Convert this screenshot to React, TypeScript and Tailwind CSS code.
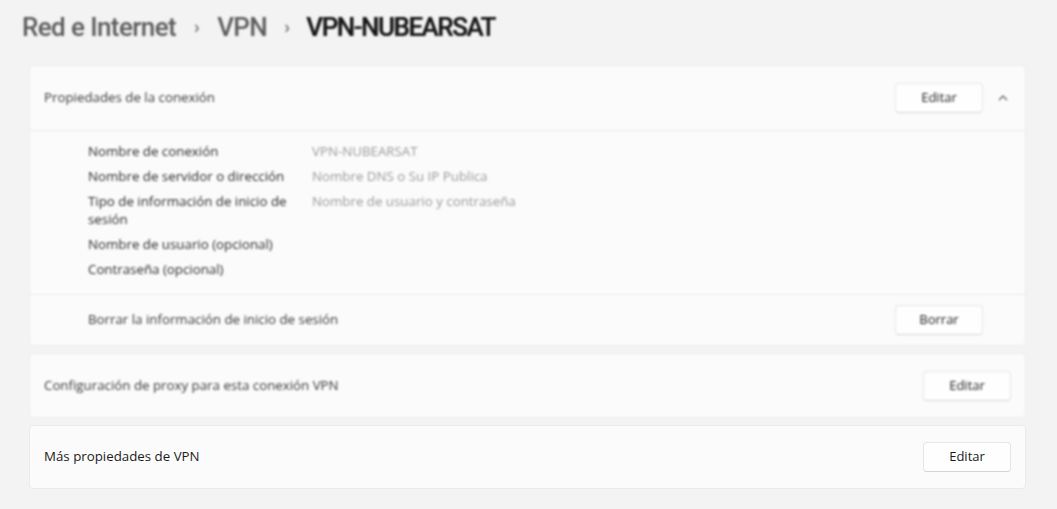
import React from "react";

const font = { fontFamily: '"Open Sans", "Noto Sans", sans-serif' };
const titleFont = { fontFamily: 'Roboto, "Noto Sans", sans-serif' };

function Btn({ label }: { label: string }) {
  return (
    <button className="w-[88px] h-[30px] rounded-[4px] bg-[#fefefe] border border-[#e6e6e6] border-b-[#d4d4d4] text-[13px] text-[#1b1b1b] flex items-center justify-center">
      {label}
    </button>
  );
}

const rows: [string, string][] = [
  ["Nombre de conexión", "VPN-NUBEARSAT"],
  ["Nombre de servidor o dirección", "Nombre DNS o Su IP Publica"],
  ["Tipo de información de inicio de sesión", "Nombre de usuario y contraseña"],
  ["Nombre de usuario (opcional)", ""],
  ["Contraseña (opcional)", ""],
];

export default function App() {
  return (
    <div style={font} className="w-[1057px] h-[509px] bg-[#f3f3f3] overflow-hidden">
      <div className="blur-[1.2px]">
        <div className="pl-[22px] pt-[8px] h-[65px] flex items-start">
          <h1 style={titleFont} className="flex items-center whitespace-nowrap text-[26px] leading-[38px] font-medium tracking-[-0.6px]">
            <span className="text-[#5c5c5c]">Red e Internet</span>
            <span className="text-[#6a6a6a] text-[19px] mx-[18px]">›</span>
            <span className="text-[#5c5c5c]">VPN</span>
            <span className="text-[#6a6a6a] text-[19px] mx-[17px]">›</span>
            <span className="text-[#161616] font-medium tracking-[-1.5px] [text-shadow:0_0_0.6px_#161616]">VPN-NUBEARSAT</span>
          </h1>
        </div>
        <div className="ml-[29px] w-[997px] flex flex-col gap-[7px]">
          <div className="bg-[#fbfbfb] border border-[#ebebeb] rounded-[4px]">
            <div className="h-[65px] flex items-center pl-[14px] pr-[16px] border-b border-[#ececec]">
              <span className="text-[13.3px] text-[#3a3a3a] flex-1">Propiedades de la conexión</span>
              <Btn label="Editar" />
              <svg width="12" height="12" viewBox="0 0 12 12" className="ml-[14px]">
                <path d="M2 8 L6 4 L10 8" fill="none" stroke="#555" strokeWidth="1.1" />
              </svg>
            </div>
            <div className="pl-[58px] pt-[11px] pb-[16px] border-b border-[#ececec] grid grid-cols-[205px_1fr] gap-x-[19px] gap-y-[7px] text-[13.3px] leading-[18px]">
              {rows.map(([k, v]) => (
                <React.Fragment key={k}>
                  <span className="text-[#2b2b2b]">{k}</span>
                  <span className="text-[#9a9a9a]">{v}</span>
                </React.Fragment>
              ))}
            </div>
            <div className="h-[50px] flex items-center pl-[58px] pr-[42px]">
              <span className="text-[13.3px] text-[#3a3a3a] flex-1">Borrar la información de inicio de sesión</span>
              <Btn label="Borrar" />
            </div>
          </div>
          <div className="h-[65px] bg-[#fbfbfb] border border-[#ebebeb] rounded-[4px] flex items-center pl-[14px] pr-[14px]">
            <span className="text-[13.3px] text-[#3a3a3a] flex-1">Configuración de proxy para esta conexión VPN</span>
            <Btn label="Editar" />
          </div>
        </div>
      </div>
      <div className="ml-[29px] mt-[7px] w-[997px] h-[64px] bg-[#fbfbfb] border border-[#ebebeb] rounded-[4px] flex items-center pl-[14px] pr-[14px]">
        <span className="text-[13.3px] text-[#1b1b1b] flex-1">Más propiedades de VPN</span>
        <Btn label="Editar" />
      </div>
    </div>
  );
}
